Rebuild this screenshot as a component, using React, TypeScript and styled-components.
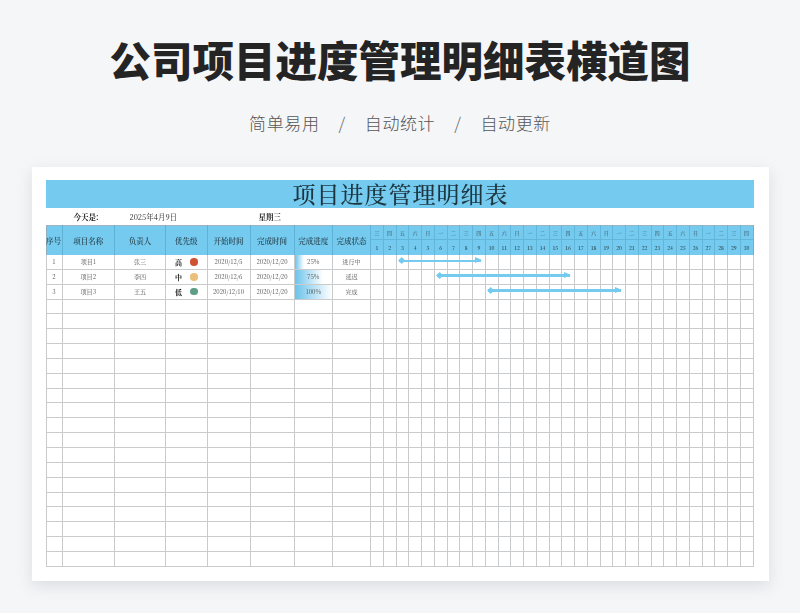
import styled, { createGlobalStyle } from "styled-components";

const GlobalStyle = createGlobalStyle`
    html, body {
        margin: 0;
        padding: 0;
        background: #f5f6f8;
    }
    body {
        width: 800px;
        height: 613px;
        overflow: hidden;
        font-family: "Noto Sans CJK SC", "Liberation Sans", sans-serif;
    }
`;

const SERIF = `"Noto Serif CJK SC", "Liberation Serif", "Noto Sans CJK SC", serif`;
const COLUMNS = "17px 52.5px 51px 41.5px 43px 44px 38.5px 38px repeat(30, 12.75px)";
const LINE = "#c9cbcd";
const BLUE = "#74caef";

const Page = styled.div`
    display: flex;
    flex-direction: column;
    align-items: center;
    width: 800px;
    height: 613px;
`;

const Heading = styled.h1`
    margin: 31px 0 0;
    height: 56px;
    font-size: 41.5px;
    line-height: 56px;
    font-weight: 900;
    color: #242424;
    white-space: nowrap;
`;

const Tagline = styled.div`
    display: flex;
    gap: 18px;
    margin-top: 23px;
    height: 26px;
    font-size: 17px;
    line-height: 26px;
    font-weight: 300;
    letter-spacing: 0.6px;
    color: #555;
`;

const Slash = styled.span`
    margin: 0 1px;
    color: #666;
`;

const Card = styled.div`
    box-sizing: border-box;
    width: 737px;
    height: 414px;
    margin-top: 31px;
    padding: 13px 15px 0 14px;
    background: #fff;
    box-shadow: 0 5px 14px rgba(150, 158, 170, 0.28);
`;

// the reference is a slightly soft photo of a sheet
const Sheet = styled.div`
    filter: blur(0.3px);
`;

const Band = styled.div`
    height: 28px;
    padding-left: 2px;
    line-height: 28px;
    text-align: center;
    background: ${BLUE};
    color: #1d3640;
    font-family: ${SERIF};
    font-size: 23px;
    font-weight: 500;
    letter-spacing: 1px;
`;

const InfoRow = styled.div`
    display: grid;
    grid-template-columns: 83px 130px 100px;
    height: 17px;
    line-height: 17px;
    font-family: ${SERIF};
    font-size: 7.5px;
    color: #222;
`;

const InfoItem = styled.span<{ $strong?: boolean; $indent: number }>`
    padding-left: ${(p) => p.$indent}px;
    font-weight: ${(p) => (p.$strong ? 700 : 400)};
`;

const HeadGrid = styled.div`
    display: grid;
    grid-template-columns: ${COLUMNS};
    grid-template-rows: 15px 15px;
    background: ${BLUE};
    font-family: ${SERIF};
    box-shadow: inset 0 1px 0 #9fb4bf, inset 1px 0 0 #8fb0bf;
`;

const HeadCell = styled.div`
    grid-row: 1 / 3;
    display: flex;
    align-items: center;
    justify-content: center;
    border-right: 1px solid #5fb2d6;
    font-size: 7.5px;
    font-weight: 600;
    color: #2c4a57;
    white-space: nowrap;
`;

const DayCell = styled.div<{ $muted?: boolean }>`
    display: flex;
    align-items: center;
    justify-content: center;
    border-right: 1px solid #62b6d9;
    border-bottom: ${(p) => (p.$muted ? "1px solid #62b6d9" : "none")};
    font-size: 5px;
    font-weight: 600;
    color: ${(p) => (p.$muted ? "#47707f" : "#2f4e5a")};
`;

const Row = styled.div`
    position: relative;
    display: grid;
    grid-template-columns: ${COLUMNS};
    height: 14.857px;
    font-family: ${SERIF};
`;

const Cell = styled.div<{ $strong?: boolean }>`
    position: relative;
    box-sizing: border-box;
    display: flex;
    align-items: center;
    justify-content: center;
    gap: 8px;
    border-right: 1px solid ${LINE};
    border-bottom: 1px solid ${LINE};
    font-size: ${(p) => (p.$strong ? 7 : 6.1)}px;
    font-weight: ${(p) => (p.$strong ? 700 : 400)};
    color: ${(p) => (p.$strong ? "#222" : "#555")};
    white-space: nowrap;

    &:first-child {
        border-left: 1px solid ${LINE};
    }
`;

const Dot = styled.i<{ $color: string }>`
    width: 7.5px;
    height: 7.5px;
    border-radius: 50%;
    background: ${(p) => p.$color};
`;

const Fill = styled.div<{ $value: number }>`
    position: absolute;
    top: 0;
    bottom: 0;
    left: 0;
    width: ${(p) => p.$value}%;
    background: linear-gradient(90deg, #6cc3ea, #ffffff);
`;

const FillLabel = styled.span`
    position: relative;
`;

// placed on the day columns of its own row, the grid area is its containing block
const Bar = styled.div<{ $from: number; $to: number }>`
    position: absolute;
    grid-row: 1;
    grid-column: ${(p) => p.$from + 8} / ${(p) => p.$to + 9};
    left: 2.5px;
    right: 5px;
    top: 4.5px;
    height: 2.5px;
    background: ${BLUE};

    &::before {
        content: "";
        position: absolute;
        left: 0;
        top: -1.5px;
        width: 5.4px;
        height: 5.4px;
        transform: rotate(45deg);
        background: ${BLUE};
    }

    &::after {
        content: "";
        position: absolute;
        right: -1px;
        top: -2.3px;
        border-left: 7px solid ${BLUE};
        border-top: 3.5px solid transparent;
        border-bottom: 3.5px solid transparent;
    }
`;

const WEEK = ["三", "四", "五", "六", "日", "一", "二"];
const DAYS = Array.from({ length: 30 }, (_, i) => i + 1);
const HEADS = ["序号", "项目名称", "负责人", "优先级", "开始时间", "完成时间", "完成进度", "完成状态"];

const PROJECTS = [
    { id: 1, name: "项目1", owner: "张三", level: "高", color: "#cf5232", start: "2020/12/5", end: "2020/12/20", progress: 25, status: "进行中", from: 3, to: 9 },
    { id: 2, name: "项目2", owner: "李四", level: "中", color: "#eabf7a", start: "2020/12/6", end: "2020/12/20", progress: 75, status: "延迟", from: 6, to: 16 },
    { id: 3, name: "项目3", owner: "王五", level: "低", color: "#5c9f86", start: "2020/12/10", end: "2020/12/20", progress: 100, status: "完成", from: 10, to: 20 },
];

const EMPTY_ROWS = Array.from({ length: 18 }, (_, i) => i);

const DayCells = () => (
    <>
        {DAYS.map((d) => (
            <Cell key={d} />
        ))}
    </>
);

const App = () => {
    return (
        <Page>
            <GlobalStyle />
            <Heading>公司项目进度管理明细表横道图</Heading>
            <Tagline>
                <span>简单易用</span>
                <Slash>/</Slash>
                <span>自动统计</span>
                <Slash>/</Slash>
                <span>自动更新</span>
            </Tagline>
            <Card>
                <Sheet>
                    <Band>项目进度管理明细表</Band>
                    <InfoRow>
                        <InfoItem $strong $indent={28}>今天是:</InfoItem>
                        <InfoItem $indent={1}>2025年4月9日</InfoItem>
                        <InfoItem $strong $indent={0}>星期三</InfoItem>
                    </InfoRow>
                    <HeadGrid>
                        {HEADS.map((h) => (
                            <HeadCell key={h}>{h}</HeadCell>
                        ))}
                        {DAYS.map((d) => (
                            <DayCell key={d} $muted>{WEEK[(d - 1) % 7]}</DayCell>
                        ))}
                        {DAYS.map((d) => (
                            <DayCell key={d}>{d}</DayCell>
                        ))}
                    </HeadGrid>
                    {PROJECTS.map((p) => (
                        <Row key={p.id}>
                            <Cell>{p.id}</Cell>
                            <Cell>{p.name}</Cell>
                            <Cell>{p.owner}</Cell>
                            <Cell $strong>{p.level}<Dot $color={p.color} /></Cell>
                            <Cell>{p.start}</Cell>
                            <Cell>{p.end}</Cell>
                            <Cell>
                                <Fill $value={p.progress} />
                                <FillLabel>{p.progress}%</FillLabel>
                            </Cell>
                            <Cell>{p.status}</Cell>
                            <DayCells />
                            <Bar $from={p.from} $to={p.to} />
                        </Row>
                    ))}
                    {EMPTY_ROWS.map((r) => (
                        <Row key={r}>
                            {HEADS.map((h) => (
                                <Cell key={h} />
                            ))}
                            <DayCells />
                        </Row>
                    ))}
                </Sheet>
            </Card>
        </Page>
    );
};

export default App;
